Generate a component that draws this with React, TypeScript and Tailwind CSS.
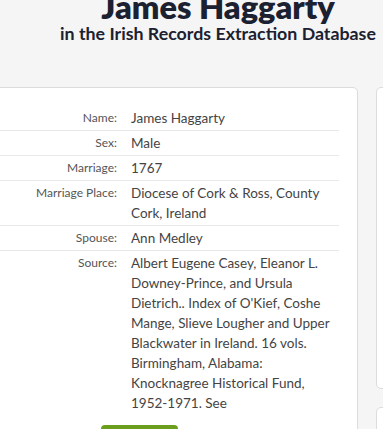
import React from 'react';

const rows: { label: string; value: string }[] = [
  { label: 'Name:', value: 'James Haggarty' },
  { label: 'Sex:', value: 'Male' },
  { label: 'Marriage:', value: '1767' },
  { label: 'Marriage Place:', value: 'Diocese of Cork & Ross, County Cork, Ireland' },
  { label: 'Spouse:', value: 'Ann Medley' },
  {
    label: 'Source:',
    value:
      "Albert Eugene Casey, Eleanor L. Downey-Prince, and Ursula Dietrich.. Index of O'Kief, Coshe Mange, Slieve Lougher and Upper Blackwater in Ireland. 16 vols. Birmingham, Alabama: Knocknagree Historical Fund, 1952-1971. See",
  },
];

export default function App() {
  return (
    <div className="w-[383px] h-[429px] overflow-hidden bg-[#f5f5f5] font-['Lato',sans-serif]">
      {/* header */}
      <div className="w-[436px] text-center text-[#1b2130] -mt-[11px]">
        <h1 className="text-[32.5px] font-extrabold leading-[36px]">James Haggarty</h1>
        <h2 className="text-[17.8px] font-bold leading-[20px] -mt-[2px]">in the Irish Records Extraction Database</h2>
      </div>

      <div className="flex gap-[18px] mt-[44px] -ml-[21px]">
        {/* record card */}
        <div className="w-[379px] shrink-0 bg-white border border-[#dcdcdc] rounded-[5px] pt-[18px] pr-[18px] pb-4">
          {rows.map((r, i) => (
            <div
              key={r.label}
              className={`flex gap-[14px] text-[13.5px] leading-[20px] pt-[2px] pb-[2px] ${
                i < rows.length - 1 ? 'border-b border-[#e9e9e9]' : ''
              }`}
            >
              <div className="w-[137px] shrink-0 text-right text-[#555] text-[12px]">{r.label}</div>
              <div className="flex-1 text-[#444]">{r.value}</div>
            </div>
          ))}
          <div className="pl-[121px] mt-[10px]">
            <button className="w-[77px] h-[30px] rounded-[4px] bg-[#6c9e1e] text-white text-sm">Details</button>
          </div>
        </div>

        {/* sidebar */}
        <div className="flex flex-col gap-[18px] shrink-0">
          <div className="w-[200px] h-[302px] bg-white border border-[#dcdcdc] rounded-[5px]"></div>
          <div className="w-[200px] h-[100px] bg-white border border-[#dcdcdc] rounded-[5px]"></div>
        </div>
      </div>
    </div>
  );
}
